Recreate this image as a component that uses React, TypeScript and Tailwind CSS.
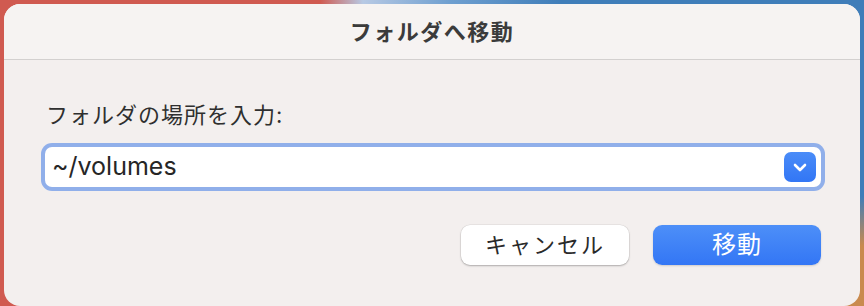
import React from 'react';

export default function App() {
  return (
    <div
      className="w-[864px] h-[306px] overflow-hidden pl-[4px] pt-[4px] pr-[4px] bg-[radial-gradient(circle_at_100%_100%,#c98a4e_0px,#c98a4e_60px,transparent_110px),linear-gradient(90deg,#d05a50_0%,#d05a50_37%,#b7c9e4_42%,#6f9fd0_52%,#3f7db9_65%,#3f7db9_100%)]"
      style={{ fontFamily: '"Inter", "Noto Sans CJK JP", sans-serif' }}
    >
      <div className="w-[856px] h-[302px] rounded-[16px] bg-[#f3efee] overflow-hidden flex flex-col">
        <div className="h-[56px] flex items-center justify-center border-b border-[#d3d0cf] bg-[#f6f3f2]">
          <span className="text-[22px] font-bold text-[#3b3b3b] tracking-[1.5px] pt-[2px]">フォルダへ移動</span>
        </div>
        <div className="flex flex-col pl-[41px] pr-[39px] pt-[42px]">
          <div className="text-[22px] leading-[26px] text-[#2f2f2f] pl-[1px] tracking-[1px]">フォルダの場所を入力:</div>
          <div className="mt-[19px] h-[40px] bg-white rounded-[7px] shadow-[0_0_0_4px_#90afea] flex items-center justify-between pl-[7px] pr-[5px]">
            <span className="text-[25px] text-[#262626]">~/volumes</span>
            <div className="w-[32px] h-[30px] rounded-[7px] bg-[linear-gradient(180deg,#4a8cf8,#3276f5)] flex items-center justify-center">
              <svg width="14" height="9" viewBox="0 0 14 9" fill="none">
                <path d="M2 2l5 5 5-5" stroke="white" strokeWidth="2.6" strokeLinecap="round" strokeLinejoin="round" />
              </svg>
            </div>
          </div>
          <div className="mt-[38px] flex justify-end gap-[24px]">
            <button className="w-[168px] h-[40px] rounded-[9px] bg-white shadow-[0_1px_2px_rgba(0,0,0,0.25),0_0_0_0.5px_rgba(0,0,0,0.08)] text-[22px] text-[#2a2a2a] tracking-[2px]">
              キャンセル
            </button>
            <button className="w-[168px] h-[40px] rounded-[9px] bg-[linear-gradient(180deg,#4d8ff8,#3376f5)] shadow-[0_1px_2px_rgba(0,0,0,0.15)] text-[24px] text-white tracking-[1px]">
              移動
            </button>
          </div>
        </div>
      </div>
    </div>
  );
}
